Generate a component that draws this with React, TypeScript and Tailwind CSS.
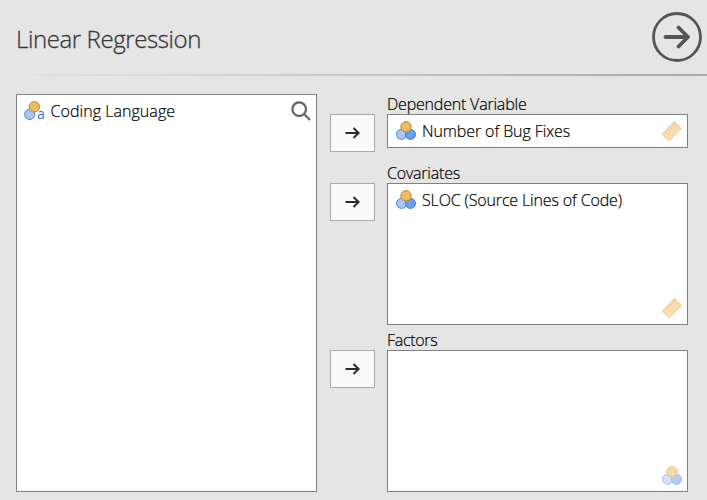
import React from 'react';

const labelFont = "font-['Open_Sans','Noto_Sans',sans-serif] font-light text-[16px] text-[#000000] [-webkit-text-stroke:0.2px_#000000] whitespace-nowrap";

function NominalIcon({ faded = false }: { faded?: boolean }) {
  return (
    <svg width="20" height="20" viewBox="0 0 20 20" className={`block shrink-0 ${faded ? 'opacity-50' : ''}`}>
      <circle cx="5.5" cy="13.4" r="5" fill="#a9c6f1" stroke="#3e86ee" />
      <circle cx="14.5" cy="13.4" r="5" fill="#6c9fe8" stroke="#2f7bea" />
      <circle cx="10" cy="5.8" r="5.2" fill="#ecbb62" stroke="#c08a28" />
    </svg>
  );
}

function NominalTextIcon() {
  return (
    <div className="flex h-[22px] w-[22px] shrink-0 items-end">
      <svg width="16" height="20" viewBox="0 0 16 20" className="mb-px block shrink-0">
        <circle cx="5.7" cy="13.4" r="5.1" fill="#a9c6f1" stroke="#3e86ee" />
        <circle cx="10.3" cy="5.8" r="5.2" fill="#ecbb62" stroke="#c08a28" />
      </svg>
      <span className="-ml-[3px] mb-[-1px] font-['Open_Sans','Noto_Sans',sans-serif] text-[14px] font-medium leading-[18px] text-[#2a77e6]">a</span>
    </div>
  );
}

function RulerIcon() {
  return (
    <svg width="22" height="22" viewBox="0 0 22 22" className="block opacity-60">
      <path d="M13.4 1.2 20.6 8.6 8.2 21 1.2 14.2Z" fill="#f3c87c" stroke="#e8ae4a" strokeLinejoin="round" />
      <path d="M4.2 11.5l2.6 2M6.4 9.2l1.9 1.5M8.6 7l2.6 2M10.8 4.8l1.9 1.5M12.8 2.8l2.4 2" stroke="#cf9838" fill="none" />
    </svg>
  );
}

function MoveButton() {
  return (
    <button className="flex h-[38px] w-[45px] shrink-0 items-center justify-center border border-[#aaaaaa] bg-[#fafafa]">
      <svg width="16" height="14" viewBox="0 0 16 14" fill="none" stroke="#2d2d2d" strokeWidth="2">
        <path d="M.5 7h13.2M8.5 2 13.6 7l-5.1 5" />
      </svg>
    </button>
  );
}

function Field({ label, value, height, rowHeight, tracking, valueTracking = '', corner, children }: {
  label: string; value?: string; height: string; rowHeight: string; tracking: string; valueTracking?: string; corner: string; children: React.ReactNode;
}) {
  return (
    <section className={`flex items-start gap-3 ${rowHeight}`}>
      <div className="pt-5"><MoveButton /></div>
      <div className="w-[301px]">
        <div className={`${labelFont} h-5 leading-5 ${tracking}`}>{label}</div>
        <div className={`relative border border-[#808080] bg-white pl-[7.5px] pt-[5px] ${height}`}>
          {value && (
            <div className="flex h-[22px] items-center gap-[6.5px]">
              <NominalIcon />
              <span className={`${labelFont} leading-[22px] ${valueTracking}`}>{value}</span>
            </div>
          )}
          <div className={`absolute bottom-[5px] ${corner}`}>{children}</div>
        </div>
      </div>
    </section>
  );
}

export default function App() {
  return (
    <div className="h-[500px] w-[707px] overflow-hidden bg-[#e5e5e5]">
      <header className="flex h-[74px] items-center justify-between pl-4 pr-[5px]">
        <h1 className="whitespace-nowrap pt-[3px] font-['Open_Sans','Noto_Sans',sans-serif] text-[24px] font-light tracking-[-0.4px] text-[#383838] [-webkit-text-stroke:0.3px_#383838]">Linear Regression</h1>
        <svg width="50" height="50" viewBox="0 0 50 50" fill="none" stroke="#555555" strokeLinecap="round" strokeLinejoin="round">
          <circle cx="25" cy="25" r="23.5" strokeWidth="2.8" />
          <path d="M13.5 25H36M26.5 15.5 36 25l-9.5 9.5" strokeWidth="3.8" />
        </svg>
      </header>
      <div className="h-[2px] bg-linear-to-r from-[#e5e5e5] to-[#aaaaaa]" />
      <main className="flex gap-[13px] pl-4 pt-[18px]">
        <div className="flex h-[398px] w-[301px] items-start justify-between border border-[#808080] bg-white pl-[7px] pr-[5px] pt-[5px]">
          <div className="flex h-[22px] items-center gap-[4.5px]">
            <NominalTextIcon />
            <span className={`${labelFont} leading-[22px] tracking-[0.05px]`}>Coding Language</span>
          </div>
          <svg width="20" height="20" viewBox="0 0 20 20" fill="none" stroke="#666666" className="mt-px">
            <circle cx="8.2" cy="8.2" r="6.8" strokeWidth="2.3" />
            <path d="m13 13 6 6" strokeWidth="2.3" />
          </svg>
        </div>
        <div className="flex flex-col">
          <Field label="Dependent Variable" value="Number of Bug Fixes" height="h-[34px]" rowHeight="h-[69px]" tracking="tracking-[-0.2px]" valueTracking="tracking-[-0.1px]" corner="right-[4px]">
            <RulerIcon />
          </Field>
          <Field label="Covariates" value="SLOC (Source Lines of Code)" height="h-[142px]" rowHeight="h-[167px]" tracking="tracking-[-0.2px]" valueTracking="tracking-[-0.15px]" corner="right-[4px]">
            <RulerIcon />
          </Field>
          <Field label="Factors" height="h-[142px]" rowHeight="h-[162px]" tracking="tracking-[-0.3px]" corner="right-[5px]">
            <NominalIcon faded />
          </Field>
        </div>
      </main>
    </div>
  );
}
